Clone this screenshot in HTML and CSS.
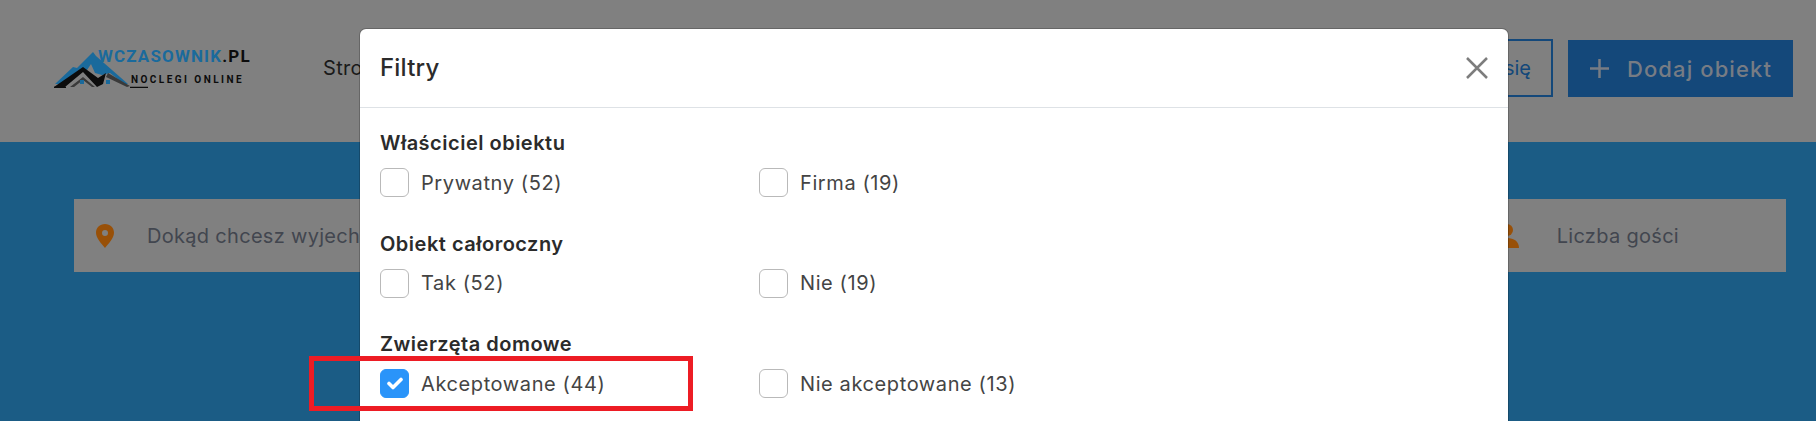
FILE: index.html
```html
<!doctype html>
<html lang="pl">
  <head>
    <meta charset="utf-8">
    <title>Wczasownik.pl</title>
    <link rel="stylesheet" href="styles.css">
  </head>
  <body>
    <div class="topbar">
      <a class="logo" href="#">
        <svg class="logo-mark" width="100" height="45" viewBox="0 -5 100 45">
          <path class="logo-blue" d="M1 36 L19 19 L23 20 L39 4 L42 8 L74 36 L70 36 L56 25 L48 27 L41 25 L37 16 L33 22 L22 26 L6 36 Z"/>
          <path class="logo-grey" d="M54 25 L76 38 L73 39 L52 29 Z M16 39 L29 29 L41 39 L38 39 L29 32 L20 39 Z"/>
          <path class="logo-black" d="M0 39 L29 19 L44 30 L52 25 L49 36 L43 39 L29 24 L11 39 Z"/>
          <path class="logo-line" d="M0 39.500 H12 M76 39.500 H94"/>
          <path class="logo-blue" d="M26 32 h4 v4 h-4 Z M52 32 h4 v4 h-4 Z"/>
        </svg>
        <span class="logo-text">
          <span class="logo-name">WCZASOWNIK<span class="logo-tld">.PL</span></span>
          <span class="logo-sub">NOCLEGI ONLINE</span>
        </span>
      </a>
      <nav class="nav"><a href="#">Stro</a></nav>
      <div class="actions">
        <a class="btn btn-outline" href="#">się</a>
        <a class="btn btn-solid" href="#">
          <svg class="plus" width="19" height="19" viewBox="0 0 19 19"><path d="M9.500 0 V19 M0 9.500 H19"/></svg>
          Dodaj obiekt
        </a>
      </div>
    </div>

    <div class="hero">
      <div class="search">
        <div class="search-field">
          <svg class="search-icon" width="18" height="24" viewBox="0 0 18 24">
            <path d="M9 0 C3.800 0 0 3.800 0 8.800 C0 14 5.500 20 9 24 C12.500 20 18 14 18 8.800 C18 3.800 14.200 0 9 0 Z M9 6 A3 3 0 1 1 9 12 A3 3 0 1 1 9 6 Z" fill-rule="evenodd"/>
          </svg>
          Dokąd chcesz wyjech
        </div>
        <div class="search-field search-guests">
          <svg class="search-icon" width="24" height="24" viewBox="0 0 24 24">
            <circle cx="12" cy="6" r="6"/>
            <path d="M0 24 C0 17.500 5 14 12 14 C19 14 24 17.500 24 24 Z"/>
          </svg>
          Liczba gości
        </div>
      </div>
    </div>

    <div class="modal">
      <div class="modal-head">
        <h2 class="modal-title">Filtry</h2>
        <svg class="modal-close" width="22" height="22" viewBox="0 0 22 22">
          <path d="M1 1 L21 21 M21 1 L1 21"/>
        </svg>
      </div>
      <div class="modal-body">
        <div class="group">
          <h3 class="group-title">Właściciel obiektu</h3>
          <div class="options">
            <label class="option"><span class="box"></span>Prywatny (52)</label>
            <label class="option"><span class="box"></span>Firma (19)</label>
          </div>
        </div>
        <div class="group">
          <h3 class="group-title">Obiekt całoroczny</h3>
          <div class="options">
            <label class="option"><span class="box"></span>Tak (52)</label>
            <label class="option"><span class="box"></span>Nie (19)</label>
          </div>
        </div>
        <div class="group">
          <h3 class="group-title">Zwierzęta domowe</h3>
          <div class="options">
            <label class="option">
              <span class="box box-on">
                <svg width="16" height="13" viewBox="0 0 16 13"><path d="M2 6.500 L6 10.500 L14 2.500"/></svg>
              </span>Akceptowane (44)
            </label>
            <label class="option"><span class="box"></span>Nie akceptowane (13)</label>
          </div>
        </div>
      </div>
    </div>

    <div class="marker"></div>
  </body>
</html>
```

FILE: styles.css
```css
html, body {
  margin: 0;
  height: 421px;
  overflow: hidden;
}
body {
  position: relative;
  background-color: #1b5c85;
  font-family: Inter, "Open Sans", sans-serif;
  color: #2b2b2b;
}
a {
  color: inherit;
  text-decoration: none;
}

/* top bar */
.topbar {
  display: flex;
  align-items: center;
  height: 142px;
  padding: 0 23px 6px 54px;
  box-sizing: border-box;
  background-color: #808080;
}
.logo {
  display: flex;
  align-items: flex-start;
  width: 269px;
  height: 50px;
  flex: none;
}
.logo-mark {
  flex: none;
  margin-right: -56px;
}
.logo-blue { fill: #1a6a9c; }
.logo-black { fill: #0c0c0c; }
.logo-grey { fill: #3a3a3a; }
.logo-line { fill: none; stroke: #0c0c0c; stroke-width: 1.5; }
.logo-text {
  display: flex;
  flex-direction: column;
  padding-top: 4px;
}
.logo-name {
  font-family: Roboto, sans-serif;
  font-weight: 700;
  font-size: 17px;
  line-height: 18px;
  letter-spacing: 1.15px;
  color: #1a6a9c;
}
.logo-tld { color: #0c0c0c; }
.logo-sub {
  margin: 9px 0 0 33px;
  font-family: Roboto, sans-serif;
  font-weight: 700;
  font-size: 10px;
  line-height: 11px;
  letter-spacing: 2.45px;
  color: #0c0c0c;
}
.nav {
  font-size: 20px;
  letter-spacing: 0.3px;
  color: #1a1a1a;
}
.actions {
  display: flex;
  gap: 15px;
  margin-left: auto;
}
.btn {
  display: flex;
  align-items: center;
  height: 58px;
  box-sizing: border-box;
  font-size: 20px;
  padding: 0 20px;
}
.btn-outline {
  border: 2px solid #14487a;
  color: #14487a;
}
.btn-solid {
  gap: 18px;
  height: 57px;
  margin-top: 1px;
  padding: 0 21px 0 22px;
  font-size: 22px;
  font-weight: 500;
  letter-spacing: 1.1px;
  background-color: #14487a;
  color: #777c84;
}
.plus {
  fill: none;
  stroke: #777c84;
  stroke-width: 2.5;
}

/* search */
.hero {
  padding: 57px 30px 0 74px;
}
.search {
  display: flex;
  justify-content: space-between;
  height: 73px;
  background-color: #808080;
  color: #42464f;
  font-size: 20px;
  letter-spacing: 0.3px;
}
.search-field {
  display: flex;
  align-items: center;
  gap: 33px;
  padding-left: 22px;
}
.search-guests {
  gap: 38px;
  padding: 0 107px 0 0;
}
.search-icon {
  fill: #985008;
}

/* modal */
.modal {
  position: absolute;
  left: 360px;
  top: 29px;
  width: 1148px;
  height: 440px;
  background-color: #fff;
  border-radius: 6px;
  box-shadow: 0 0 0 1px rgba(0, 0, 0, 0.2);
}
.modal-head {
  display: flex;
  align-items: center;
  justify-content: space-between;
  height: 78px;
  padding: 0 20px;
  border-bottom: 1px solid #dee2e6;
}
.modal-title {
  margin: 0 0 2px;
  font-size: 24px;
  font-weight: 500;
  letter-spacing: 0.2px;
  color: #2b2b2b;
}
.modal-close {
  fill: none;
  stroke: #7d7d7d;
  stroke-width: 2.5;
}
.modal-body {
  padding: 22px 20px 0;
}
.group {
  margin-bottom: 33.5px;
}
.group-title {
  margin: 0 0 11px;
  font-size: 20px;
  line-height: 27px;
  font-weight: 600;
  letter-spacing: 0.5px;
  color: #2b2b2b;
}
.options {
  display: grid;
  grid-template-columns: 379px 1fr;
}
.option {
  display: flex;
  align-items: center;
  gap: 12px;
  height: 29px;
  font-size: 20px;
  letter-spacing: 0.6px;
  color: #444;
}
.box {
  width: 29px;
  height: 29px;
  box-sizing: border-box;
  border: 1px solid #b9b9b9;
  border-radius: 6px;
  background-color: #fff;
}
.box-on {
  display: flex;
  align-items: center;
  justify-content: center;
  border-color: #2a94f9;
  background-color: #2a94f9;
}
.box-on svg {
  fill: none;
  stroke: #fff;
  stroke-width: 3.6;
  stroke-linecap: round;
  stroke-linejoin: round;
}

/* red frame drawn over the screenshot */
.marker {
  position: absolute;
  left: 309px;
  top: 356px;
  width: 384px;
  height: 55px;
  box-sizing: border-box;
  border: 5px solid #ed1c24;
}
```
